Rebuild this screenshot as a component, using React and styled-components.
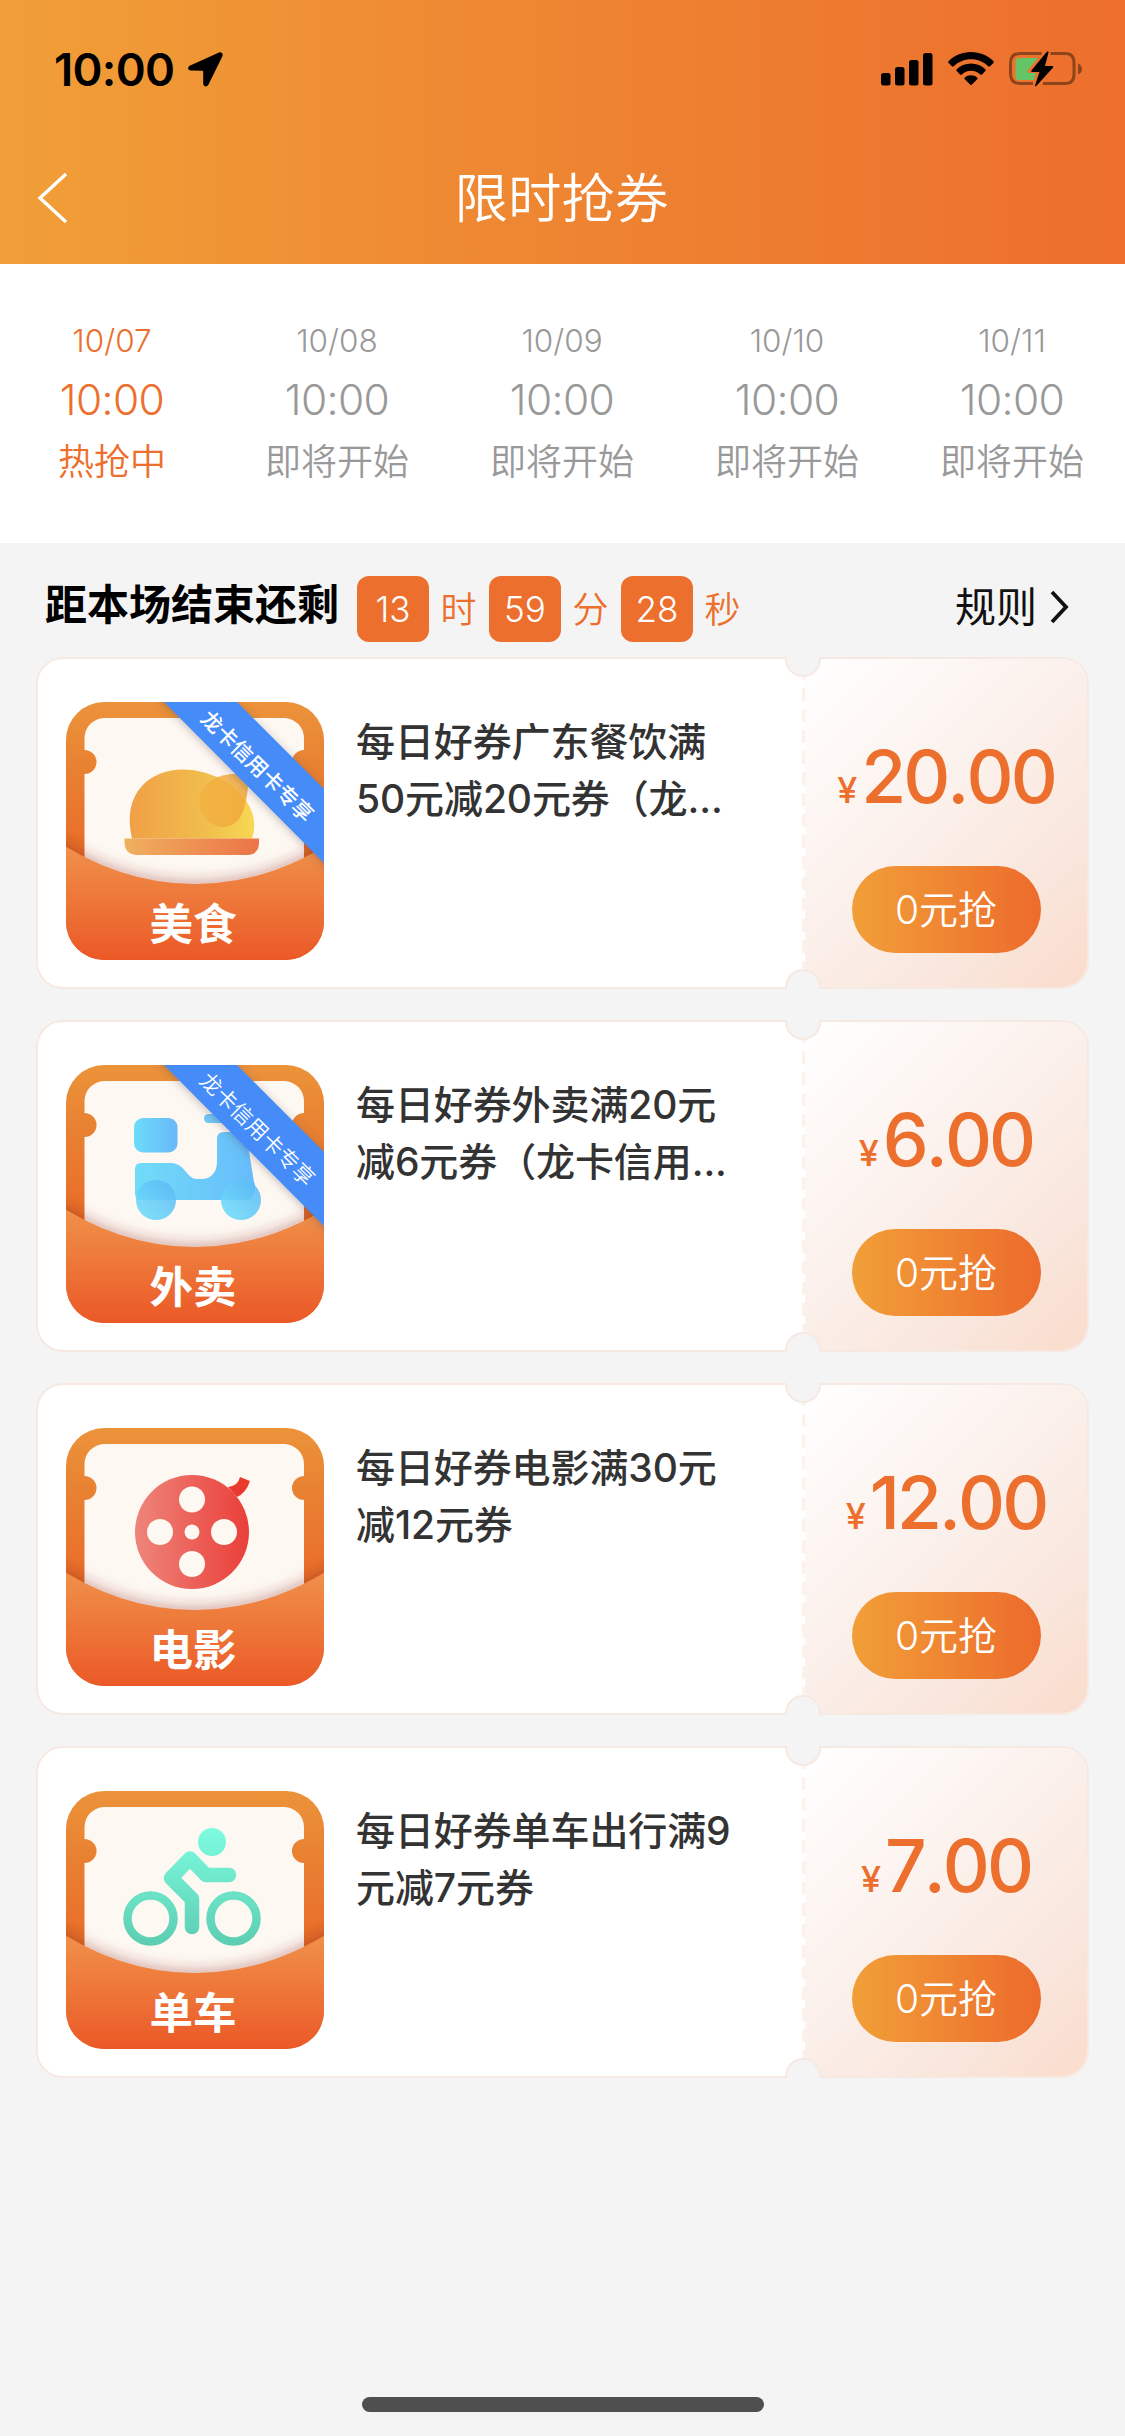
import React from 'react';
import styled, { createGlobalStyle } from 'styled-components';

const GlobalStyle = createGlobalStyle`
  *, *::before, *::after { box-sizing: border-box; }
  body {
    margin: 0;
    background: #f4f4f4;
    font-family: Inter, "Noto Sans CJK SC", sans-serif;
  }
`;

const Page = styled.div`
  width: 1125px;
  height: 2436px;
  display: flex;
  flex-direction: column;
  overflow: hidden;
  background: #f4f4f4;
`;

const Header = styled.header`
  height: 264px;
  flex: none;
  background: linear-gradient(90deg, #f19f38 0%, #ee8732 45%, #ed6e2d 100%);
`;

const StatusBar = styled.div`
  height: 138px;
  display: flex;
  align-items: center;
  justify-content: space-between;
  padding: 0 43px 0 54px;
`;

const StatusGroup = styled.div`
  display: flex;
  align-items: center;
  gap: ${(p) => p.$gap}px;
`;

const Clock = styled.span`
  font-size: 45.5px;
  font-weight: 600;
  line-height: 56px;
  letter-spacing: -0.7px;
  padding-top: 1px;
  color: #000;
`;

const NavBar = styled.div`
  height: 124px;
  display: grid;
  grid-template-columns: 120px 1fr 120px;
  align-items: center;
`;

const BackButton = styled.button`
  display: flex;
  border: 0;
  background: none;
  padding: 0 0 4px 36px;
`;

const Title = styled.h1`
  margin: 0;
  padding: 0 2px 3px 0;
  text-align: center;
  color: #fff;
  font-size: 53.5px;
  font-weight: 350;
  line-height: 76px;
`;

const Sessions = styled.nav`
  height: 279px;
  flex: none;
  display: grid;
  grid-template-columns: repeat(5, 225px);
  background: #fff;
`;

const Session = styled.div`
  display: flex;
  flex-direction: column;
  align-items: center;
  padding-top: 54px;
  padding-right: 1px;
  font-weight: 350;
  color: ${(p) => (p.$active ? '#ed6f2d' : '#999')};
`;

const SessionDate = styled.span`
  font-size: 31.5px;
  line-height: 46px;
`;

const SessionTime = styled.span`
  font-size: 42.5px;
  line-height: 72px;
  letter-spacing: -0.6px;
`;

const SessionState = styled.span`
  font-size: 36px;
  line-height: 52px;
`;

const Countdown = styled.div`
  height: 114px;
  flex: none;
  display: flex;
  align-items: center;
  padding: 17px 56px 0 45px;
`;

const CountdownLabel = styled.span`
  font-size: 42px;
  font-weight: 700;
  line-height: 60px;
  margin: -8px 18px 0 0;
  white-space: nowrap;
  color: #000;
`;

const TimeBox = styled.span`
  width: 72px;
  height: 66px;
  border-radius: 12px;
  background: #ed6f2d;
  color: #fff;
  font-size: 35px;
  font-weight: 350;
  line-height: 66px;
  text-align: center;
`;

const TimeUnit = styled.span`
  width: 60px;
  padding: 0 1px 3px 0;
  text-align: center;
  color: #ed6f2d;
  font-size: 36px;
  font-weight: 350;
`;

const RulesLink = styled.a`
  margin-left: auto;
  padding-bottom: 3px;
  display: flex;
  align-items: center;
  gap: 13px;
  font-size: 41px;
  line-height: 60px;
  color: #111;
`;

const CouponList = styled.main`
  flex: 1;
  display: flex;
  flex-direction: column;
  gap: 31px;
  padding: 0 36px;
`;

const Coupon = styled.article`
  position: relative;
  height: 332px;
  display: flex;
  border: 2px solid #f6e9e2;
  border-radius: 27px;
  background: #fff;

  &::before,
  &::after {
    content: '';
    position: absolute;
    left: 747px;
    width: 36px;
    height: 20px;
    border: 2px solid #f6e9e2;
    background: #f4f4f4;
  }
  &::before {
    top: -2px;
    border-top: 0;
    border-radius: 0 0 18px 18px;
  }
  &::after {
    bottom: -2px;
    border-bottom: 0;
    border-radius: 18px 18px 0 0;
  }
`;

const CouponBody = styled.div`
  width: 764px;
  display: flex;
  gap: 32px;
  padding: 43px 0 0 28px;
`;

const CouponName = styled.h2`
  margin: 11px 0 0;
  color: #333;
  font-size: 39px;
  font-weight: 500;
  line-height: 57px;
  letter-spacing: -0.1px;
  white-space: pre-line;
`;

const CouponSide = styled.div`
  flex: 1;
  display: flex;
  flex-direction: column;
  align-items: center;
  padding-left: 3px;
  border-radius: 0 25px 25px 0;
  background:
    repeating-linear-gradient(180deg, #fff 0 8px, #fdf1ea 8px 21px) left top / 3px 100% no-repeat,
    linear-gradient(135deg, #fff 0%, #fcf3ef 38%, #f9e6dc 76%, #fadccc 100%);
`;

const Price = styled.div`
  height: 207px;
  padding-top: 74px;
  display: flex;
  align-items: baseline;
  gap: 4px;
  color: #ed6f2d;
  font-weight: 500;
  font-kerning: none;
  line-height: 88px;
`;

const Currency = styled.span`
  font-size: 36px;
`;

const Amount = styled.span`
  font-size: 73px;
  letter-spacing: -3px;
`;

const GrabButton = styled.button`
  width: 189px;
  height: 87px;
  padding: 0;
  border: 0;
  border-radius: 44px;
  background: linear-gradient(90deg, #f19f38, #ed6b2c);
  color: #fff;
  font: 350 39px/84px Inter, "Noto Sans CJK SC", sans-serif;
`;

const HomeIndicator = styled.div`
  width: 402px;
  height: 15px;
  flex: none;
  margin: 0 auto 24px;
  border-radius: 8px;
  background: #4f4f4f;
`;

const Picture = styled.svg`
  display: block;
  flex: none;
`;

const LocationIcon = () => (
  <Picture width="35" height="35" viewBox="0 0 35 35">
    <path d="M30.500.7 2.200 13.500C-.8 15-.5 18.400 2.800 18.500L14 18.700c.8 0 1.200.4 1.200 1.200V31c.1 4.200 3.800 4.500 5.300 1.500L34.300 4.600C35.600 1.600 33.300-.5 30.500.7Z" fill="#000" />
  </Picture>
);

const SignalIcon = () => (
  <Picture width="52" height="33" viewBox="0 0 52 33">
    <rect x="0" y="20" width="9.500" height="12.500" rx="2.500" />
    <rect x="14" y="14" width="9.500" height="18.500" rx="2.500" />
    <rect x="28" y="7" width="9.500" height="25.500" rx="2.500" />
    <rect x="42" y="0" width="9.500" height="32.500" rx="2.500" />
  </Picture>
);

const WifiIcon = () => (
  <Picture width="46" height="34" viewBox="0 0 46 34">
    <path d="M23 0C32 0 39.800 3.500 45.300 9.100c.7.700.7 1.200.1 1.800l-3.300 3.300c-.6.600-1.200.6-1.800 0C35.800 9.900 29.800 7.200 23 7.200S10.200 9.900 5.700 14.200c-.6.600-1.200.6-1.800 0L.6 10.900c-.6-.6-.6-1.100.1-1.800C6.200 3.500 14 0 23 0Z" />
    <path d="M23 11.600c5.700 0 10.700 2.200 14.300 5.700.6.600.6 1.200 0 1.800l-3.300 3.300c-.6.600-1.100.6-1.700.1-2.500-2.300-5.700-3.700-9.300-3.700s-6.800 1.400-9.300 3.700c-.6.500-1.100.5-1.700-.1L8.700 19.100c-.6-.6-.6-1.200 0-1.800 3.600-3.500 8.600-5.700 14.300-5.700Z" />
    <path d="M23 23.200c2.400 0 4.500.9 6.100 2.300.7.600.7 1.200.1 1.800l-5.300 5.300c-.6.600-1.200.6-1.800 0l-5.300-5.300c-.6-.6-.6-1.200.1-1.800 1.600-1.400 3.700-2.300 6.100-2.300Z" />
  </Picture>
);

const BatteryIcon = () => (
  <Picture width="73" height="36" viewBox="0 0 73 36">
    <path d="M32.500 2.500H11Q1.500 2.500 1.500 12v11Q1.500 32.500 11 32.500H24M41.500 2.500H56.500Q65 2.500 65 12v11Q65 32.500 56.500 32.500H34" fill="none" stroke="#8f441c" strokeWidth="3" />
    <path d="M69 12.500q4 1.500 4 5.500t-4 5.500Z" fill="#8f441c" />
    <path d="M10 7H29L18.500 19.500q-1 2.500 2 2.500h6.500L25 29H10q-3.500 0-3.500-4V11q0-4 3.500-4Z" fill="#65c466" />
    <path d="M37.800.8 22.600 19.300q-1.100 1.700.9 1.700h7l-4.400 13.300q-.3 1.700 1.200.6L43.900 16.700q1.200-1.800-.8-1.800h-7.200l3.700-13.300q.1-1.800-1.800-.8Z" fill="#000" />
  </Picture>
);

const BackIcon = () => (
  <Picture width="32" height="52" viewBox="0 0 32 52">
    <path d="M30 2 4 26 30 50" fill="none" stroke="#fff" strokeWidth="3.400" />
  </Picture>
);

const ChevronIcon = () => (
  <Picture width="19" height="34" viewBox="0 0 19 34">
    <path d="M2 2 16 17 2 32" fill="none" stroke="#111" strokeWidth="3.800" />
  </Picture>
);

const FoodArt = () => (
  <g>
    <defs>
      <linearGradient id="dome" x1="0" x2="1">
        <stop offset="0" stopColor="#f0a046" />
        <stop offset=".6" stopColor="#f1bd4c" />
        <stop offset="1" stopColor="#f7d853" />
      </linearGradient>
      <linearGradient id="tray" x1="0" x2="1">
        <stop offset="0" stopColor="#efb05f" />
        <stop offset="1" stopColor="#ec7447" />
      </linearGradient>
      <linearGradient id="head" x1="0" x2="1">
        <stop offset="0" stopColor="#f2b343" />
        <stop offset="1" stopColor="#f1a63a" />
      </linearGradient>
    </defs>
    <path d="M66 136.500C61 115 64 97 76 84c11-12 25-16 41-16.500 12 0 24 3 35 8 14 6 30 20 35 38q3 12-1 23Z" fill="url(#dome)" />
    <path d="M156 125a25 25 0 0 1-22-31c3-13 18-22 34-22h14q1 18-4 35c-4 12-11 18-22 18Z" fill="url(#head)" opacity=".85" />
    <path d="M58.500 136.500h134.500v4q0 12-12 12.500H71q-12-.5-12.500-12.500Z" fill="url(#tray)" />
  </g>
);

const ScooterArt = () => (
  <g>
    <defs>
      <linearGradient id="scooter" gradientUnits="userSpaceOnUse" x1="68" x2="190" y1="0" y2="0">
        <stop offset="0" stopColor="#72dcf8" />
        <stop offset="1" stopColor="#66bbfb" />
      </linearGradient>
      <linearGradient id="crate" x1="0" x2="1">
        <stop offset="0" stopColor="#6cdcfa" />
        <stop offset="1" stopColor="#68b8f9" />
      </linearGradient>
      <linearGradient id="wheel" x1="0" x2="1" y1="1" y2="0">
        <stop offset="0" stopColor="#6ee0fa" />
        <stop offset="1" stopColor="#5cb6f6" />
      </linearGradient>
    </defs>
    <rect x="68" y="53" width="43.500" height="34.500" rx="9" fill="url(#crate)" />
    <rect x="138" y="49" width="40" height="9" rx="4.500" fill="#70c8f8" />
    <path d="M69 104q0-6 6-6h28c13 0 15 8 22 14q2 2 6 2h5c9 0 15-7 15-17V74q0-7 7-7h15q7 0 8 7l7 43c3 5 0 18-7 18H74q-5 0-5-7Z" fill="url(#scooter)" />
    <circle cx="90" cy="135" r="20" fill="url(#wheel)" opacity=".88" />
    <circle cx="175" cy="135" r="20" fill="url(#wheel)" opacity=".88" />
  </g>
);

const FilmArt = () => (
  <g>
    <defs>
      <linearGradient id="reel" x1="0" x2="1">
        <stop offset="0" stopColor="#ee857a" />
        <stop offset="1" stopColor="#ea3f3a" />
      </linearGradient>
    </defs>
    <path d="M162 59q10-1 12-10l10 4q-4 12-13 16Z" fill="#ea3a2d" />
    <circle cx="126" cy="104" r="57" fill="url(#reel)" />
    <g fill="#fef8f2">
      <circle cx="126" cy="71.500" r="13" />
      <circle cx="126" cy="136" r="13" />
      <circle cx="94" cy="104" r="13" />
      <circle cx="158" cy="104" r="13" />
      <circle cx="126" cy="104" r="7.500" />
    </g>
  </g>
);

const BikeArt = () => (
  <g>
    <defs>
      <linearGradient id="bike" gradientUnits="userSpaceOnUse" x1="0" x2="0" y1="40" y2="155">
        <stop offset="0" stopColor="#7dfbdf" />
        <stop offset="1" stopColor="#5ccdb2" />
      </linearGradient>
    </defs>
    <circle cx="146" cy="51" r="14" fill="url(#bike)" />
    <g fill="none" stroke="url(#bike)">
      <circle cx="84.500" cy="127.500" r="23" strokeWidth="8.500" />
      <circle cx="167.500" cy="127.500" r="23" strokeWidth="8.500" />
      <path d="M163 84H140L124 67.500 105 87 126 108V136" strokeWidth="14.500" strokeLinecap="round" strokeLinejoin="round" />
    </g>
  </g>
);

const CategoryPicture = ({ id, label, ribbon, ribbonWeight, ribbonSize, children }) => (
  <Picture width="258" height="258" viewBox="0 0 258 258">
    <defs>
      <clipPath id={`tile-${id}`}><rect width="258" height="258" rx="38" /></clipPath>
      <linearGradient id={`back-${id}`} x1="0" x2="0" y1="0" y2="1">
        <stop offset="0" stopColor="#ec933a" />
        <stop offset=".25" stopColor="#e88132" />
        <stop offset=".5" stopColor="#ea722c" />
        <stop offset=".62" stopColor="#e0671f" />
      </linearGradient>
      <linearGradient id={`front-${id}`} gradientUnits="userSpaceOnUse" x1="0" x2="0" y1="146" y2="258">
        <stop offset="0" stopColor="#f09049" />
        <stop offset="1" stopColor="#eb5927" />
      </linearGradient>
      <filter id={`shade-${id}`} x="-20%" y="-20%" width="140%" height="140%">
        <feDropShadow dx="0" dy="-5" stdDeviation="6" floodColor="#8a2f30" floodOpacity=".3" />
      </filter>
      <filter id={`fold-${id}`} x="-20%" y="-20%" width="140%" height="140%">
        <feDropShadow dx="0" dy="2" stdDeviation="4" floodColor="#50404a" floodOpacity=".35" />
      </filter>
    </defs>
    <g clipPath={`url(#tile-${id})`}>
      <rect width="258" height="258" fill={`url(#back-${id})`} />
      <path d="M38 16H218.500a20 20 0 0 1 19.500 20V48a12 12 0 0 0 0 24V200H18.500V72a12 12 0 0 0 0-24V36A20 20 0 0 1 38 16Z" fill="#fef8f2" />
      {children}
      <path d="M-20 132Q52 182 129 182T278 132V280H-20Z" fill={`url(#front-${id})`} filter={`url(#shade-${id})`} />
      {ribbon && <path d="M88-10H161L268 97V171Z" fill="#448cf8" filter={`url(#fold-${id})`} />}
    </g>
    {ribbon && (
      <text
        transform="translate(191.500 64) rotate(44.500)"
        textAnchor="middle"
        y="8"
        fill="#fff"
        fontFamily="'Noto Sans CJK SC', sans-serif"
        fontSize={ribbonSize}
        fontWeight={ribbonWeight}
      >
        {ribbon}
      </text>
    )}
    <text x="127" y="238" textAnchor="middle" fill="#fff" fontFamily="'Noto Sans CJK SC', sans-serif" fontSize="43.500" fontWeight="700">
      {label}
    </text>
  </Picture>
);

const sessions = [
  { date: '10/07', time: '10:00', state: '热抢中', active: true },
  { date: '10/08', time: '10:00', state: '即将开始' },
  { date: '10/09', time: '10:00', state: '即将开始' },
  { date: '10/10', time: '10:00', state: '即将开始' },
  { date: '10/11', time: '10:00', state: '即将开始' },
];

const remaining = [
  { value: '13', unit: '时' },
  { value: '59', unit: '分' },
  { value: '28', unit: '秒' },
];

const coupons = [
  { id: 'food', label: '美食', ribbon: '龙卡信用卡专享', weight: 500, size: 21.1, art: <FoodArt />, name: '每日好券广东餐饮满\n50元减20元券（龙...', amount: '20.00' },
  { id: 'takeout', label: '外卖', ribbon: '龙卡信用卡专享', weight: 350, size: 21.5, art: <ScooterArt />, name: '每日好券外卖满20元\n减6元券（龙卡信用...', amount: '6.00' },
  { id: 'film', label: '电影', art: <FilmArt />, name: '每日好券电影满30元\n减12元券', amount: '12.00' },
  { id: 'bike', label: '单车', art: <BikeArt />, name: '每日好券单车出行满9\n元减7元券', amount: '7.00' },
];

export default function App() {
  return (
    <Page>
      <GlobalStyle />
      <Header>
        <StatusBar>
          <StatusGroup $gap={14}>
            <Clock>10:00</Clock>
            <LocationIcon />
          </StatusGroup>
          <StatusGroup $gap={15}>
            <SignalIcon />
            <WifiIcon />
            <BatteryIcon />
          </StatusGroup>
        </StatusBar>
        <NavBar>
          <BackButton aria-label="返回"><BackIcon /></BackButton>
          <Title>限时抢券</Title>
        </NavBar>
      </Header>
      <Sessions>
        {sessions.map((s) => (
          <Session key={s.date} $active={s.active}>
            <SessionDate>{s.date}</SessionDate>
            <SessionTime>{s.time}</SessionTime>
            <SessionState>{s.state}</SessionState>
          </Session>
        ))}
      </Sessions>
      <Countdown>
        <CountdownLabel>距本场结束还剩</CountdownLabel>
        {remaining.map((r) => (
          <React.Fragment key={r.unit}>
            <TimeBox>{r.value}</TimeBox>
            <TimeUnit>{r.unit}</TimeUnit>
          </React.Fragment>
        ))}
        <RulesLink>规则<ChevronIcon /></RulesLink>
      </Countdown>
      <CouponList>
        {coupons.map((c) => (
          <Coupon key={c.id}>
            <CouponBody>
              <CategoryPicture id={c.id} label={c.label} ribbon={c.ribbon} ribbonWeight={c.weight} ribbonSize={c.size}>
                {c.art}
              </CategoryPicture>
              <CouponName>{c.name}</CouponName>
            </CouponBody>
            <CouponSide>
              <Price>
                <Currency>¥</Currency>
                <Amount>{c.amount}</Amount>
              </Price>
              <GrabButton>0元抢</GrabButton>
            </CouponSide>
          </Coupon>
        ))}
      </CouponList>
      <HomeIndicator />
    </Page>
  );
}
